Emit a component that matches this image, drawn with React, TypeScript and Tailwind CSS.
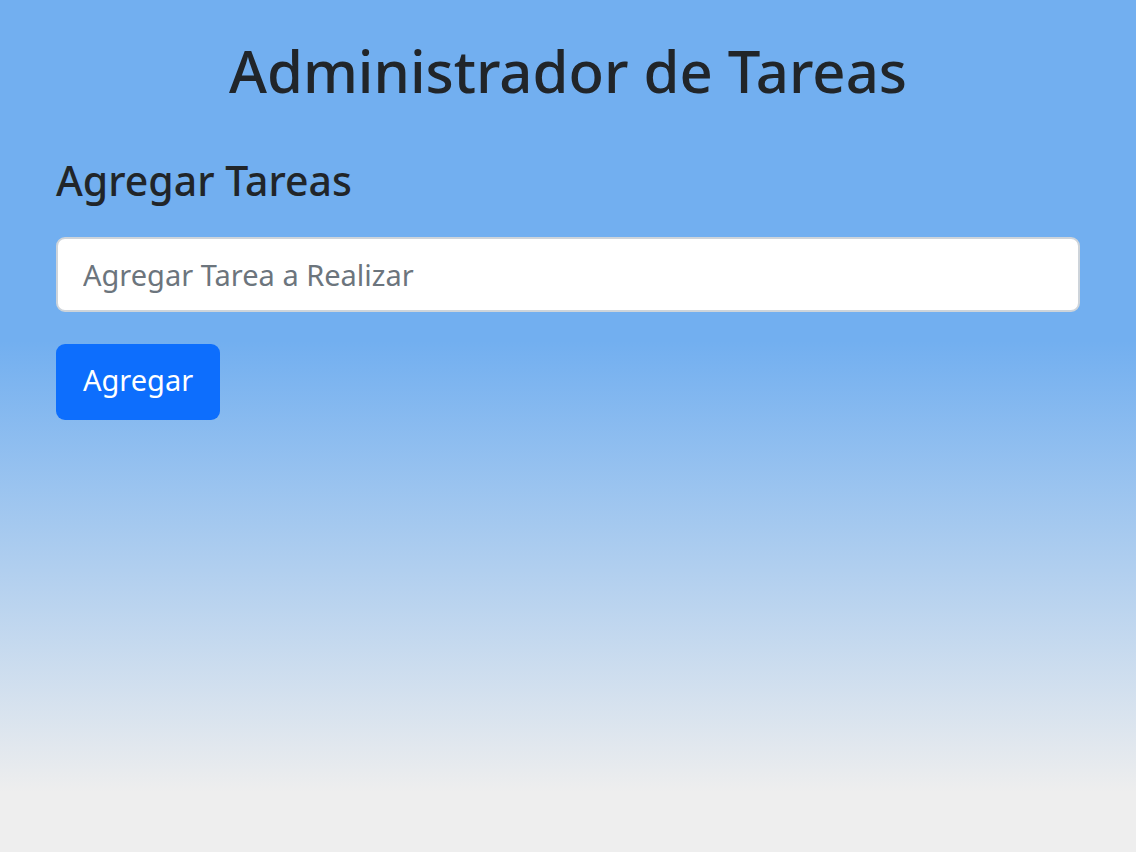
export default function App() {
  return (
    <div
      className="min-h-[852px] w-full bg-[linear-gradient(to_bottom,#72aff0_0%,#72aff0_40%,#eeeeee_93%,#eeeeee_100%)] px-[56px] pt-[35px] text-[#212529]"
      style={{ fontFamily: '"Noto Sans", "Open Sans", sans-serif' }}
    >
      <h1 className="text-center text-[58px] leading-[71px] font-medium">Administrador de Tareas</h1>
      <h4 className="mt-[49px] text-[41px] leading-[50px] font-medium">Agregar Tareas</h4>
      <div className="mt-[32px]">
        <input
          type="text"
          placeholder="Agregar Tarea a Realizar"
          className="block h-[75px] w-full rounded-[9px] border-2 border-[#ced4da] bg-white px-[25px] text-[29px] text-[#212529] placeholder:text-[#6c757d] outline-none"
        />
      </div>
      <div className="mt-[32px]">
        <button
          type="button"
          className="block h-[76px] w-[164px] rounded-[9px] bg-[#0d6efd] pl-[27px] pt-[12px] pb-[16px] text-left text-[29px] leading-[48px] text-white"
        >
          Agregar
        </button>
      </div>
    </div>
  );
}
